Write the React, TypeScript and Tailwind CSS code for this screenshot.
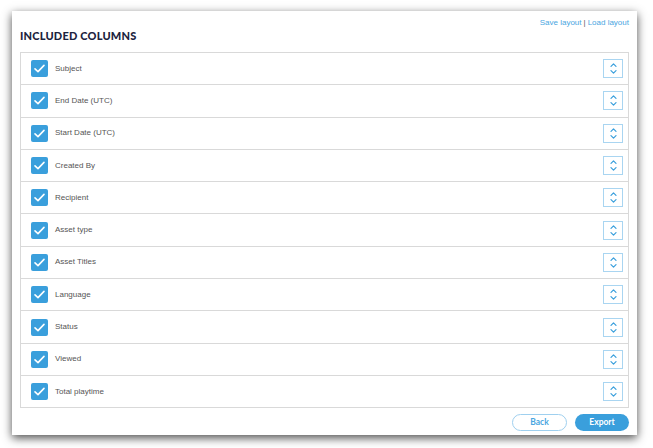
import React from "react";

const rows = [
  "Subject",
  "End Date (UTC)",
  "Start Date (UTC)",
  "Created By",
  "Recipient",
  "Asset type",
  "Asset Titles",
  "Language",
  "Status",
  "Viewed",
  "Total playtime",
];

function Check() {
  return (
    <div className="w-[17px] h-[17px] rounded-[2px] bg-[#3a9fdc] flex items-center justify-center shrink-0">
      <svg width="13" height="13" viewBox="0 0 13 13" fill="none">
        <path d="M2 6.8 L5 9.6 L11 3.4" stroke="white" strokeWidth="1.6" strokeLinecap="round" strokeLinejoin="round" />
      </svg>
    </div>
  );
}

function Sorter() {
  return (
    <div className="w-[20px] h-[19px] border border-[#a9d5f1] flex flex-col items-center justify-center gap-[3px] bg-white">
      <svg width="7" height="4" viewBox="0 0 7 4" fill="none">
        <path d="M1 3.3 L3.5 0.8 L6 3.3" stroke="#3a9fdc" strokeWidth="1.2" strokeLinecap="round" strokeLinejoin="round" />
      </svg>
      <svg width="7" height="4" viewBox="0 0 7 4" fill="none">
        <path d="M1 0.7 L3.5 3.2 L6 0.7" stroke="#3a9fdc" strokeWidth="1.2" strokeLinecap="round" strokeLinejoin="round" />
      </svg>
    </div>
  );
}

export default function App() {
  return (
    <div className="w-[653px] h-[448px] bg-white pt-[11px] pl-[12px]" style={{ fontFamily: "'Liberation Sans', Arial, sans-serif" }}>
      <div className="w-[625px] h-[424px] bg-white shadow-[0px_3px_9px_rgba(0,0,0,0.7)] px-[8px] pt-[7px] flex flex-col">
        <div className="flex justify-end h-[10px] items-center text-[8px] text-[#4aa6df]">
          <span>Save layout</span>
          <span className="text-[#555] mx-[2px]">|</span>
          <span>Load layout</span>
        </div>
        <div className="mt-[1px] h-[14px] flex items-center text-[11px] font-black text-[#1c2340] tracking-[0.2px]" style={{ fontFamily: "Lato, 'Open Sans', sans-serif" }}>
          INCLUDED COLUMNS
        </div>
        <div className="mt-[9px] border-b border-[#d9d9d9]">
          {rows.map((r) => (
            <div key={r} className="h-[32.3px] border-t border-x border-[#d9d9d9] flex items-center pl-[10px] pr-[5px] box-border">
              <Check />
              <span className="ml-[7px] text-[8px] text-[#555]">{r}</span>
              <div className="ml-auto">
                <Sorter />
              </div>
            </div>
          ))}
        </div>
        <div className="mt-[6px] flex justify-end gap-[8px]">
          <div className="w-[55px] h-[17px] rounded-full border border-[#9fd0ef] text-[#4aa6df] text-[8.5px] font-bold flex items-center justify-center" style={{ fontFamily: "Lato, sans-serif" }}>
            Back
          </div>
          <div className="w-[54px] h-[17px] rounded-full bg-[#3a9fdc] text-white text-[8.5px] font-bold flex items-center justify-center" style={{ fontFamily: "Lato, sans-serif" }}>
            Export
          </div>
        </div>
      </div>
    </div>
  );
}
